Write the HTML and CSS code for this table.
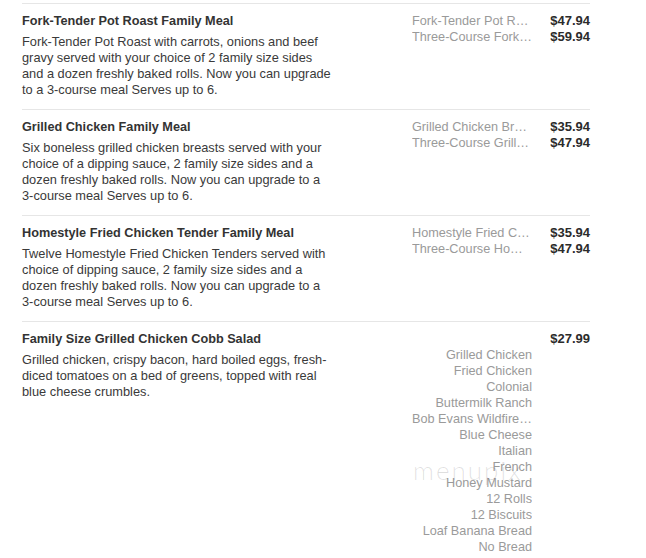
FILE: index.html
```html
<!DOCTYPE html>
<html>
<head>
<meta charset="utf-8">
<link rel="stylesheet" href="styles.css">
</head>
<body>
<div class="menu">
  <div class="item">
    <div class="info">
      <div class="title">Fork-Tender Pot Roast Family Meal</div>
      <div class="desc">Fork-Tender Pot Roast with carrots, onions and beef gravy served with your choice of 2 family size sides and a dozen freshly baked rolls. Now you can upgrade to a 3-course meal Serves up to 6.</div>
    </div>
    <div class="opts">
      <div class="opt">Fork-Tender Pot Roast Family Meal</div><div class="price">$47.94</div>
      <div class="opt">Three-Course Fork-Tender Pot Roast</div><div class="price">$59.94</div>
    </div>
  </div>
  <div class="item">
    <div class="info">
      <div class="title">Grilled Chicken Family Meal</div>
      <div class="desc">Six boneless grilled chicken breasts served with your choice of a dipping sauce, 2 family size sides and a dozen freshly baked rolls. Now you can upgrade to a 3-course meal Serves up to 6.</div>
    </div>
    <div class="opts">
      <div class="opt">Grilled Chicken Breast Family Meal</div><div class="price">$35.94</div>
      <div class="opt">Three-Course Grilled Chicken</div><div class="price">$47.94</div>
    </div>
  </div>
  <div class="item">
    <div class="info">
      <div class="title">Homestyle Fried Chicken Tender Family Meal</div>
      <div class="desc">Twelve Homestyle Fried Chicken Tenders served with choice of dipping sauce, 2 family size sides and a dozen freshly baked rolls. Now you can upgrade to a 3-course meal Serves up to 6.</div>
    </div>
    <div class="opts">
      <div class="opt">Homestyle Fried Chicken Tenders</div><div class="price">$35.94</div>
      <div class="opt">Three-Course Homestyle Fried</div><div class="price">$47.94</div>
    </div>
  </div>
  <div class="item last">
    <div class="info">
      <div class="title">Family Size Grilled Chicken Cobb Salad</div>
      <div class="desc">Grilled chicken, crispy bacon, hard boiled eggs, fresh-diced tomatoes on a bed of greens, topped with real blue cheese crumbles.</div>
    </div>
    <div class="opts">
      <div class="opt"></div><div class="price">$27.99</div>
      <div class="opt">Grilled Chicken</div><div class="price"></div>
      <div class="opt">Fried Chicken</div><div class="price"></div>
      <div class="opt">Colonial</div><div class="price"></div>
      <div class="opt">Buttermilk Ranch</div><div class="price"></div>
      <div class="opt">Bob Evans Wildfire BBQ Ranch</div><div class="price"></div>
      <div class="opt">Blue Cheese</div><div class="price"></div>
      <div class="opt">Italian</div><div class="price"></div>
      <div class="opt">French</div><div class="price"></div>
      <div class="opt">Honey Mustard</div><div class="price"></div>
      <div class="opt">12 Rolls</div><div class="price"></div>
      <div class="opt">12 Biscuits</div><div class="price"></div>
      <div class="opt">Loaf Banana Bread</div><div class="price"></div>
      <div class="opt">No Bread</div><div class="price"></div>
    </div>
    <div class="watermark">menupix</div>
  </div>
</div>
</body>
</html>
```
FILE: styles.css
```css
html, body {
  margin: 0;
  padding: 0;
  background: #fff;
}
body {
  font-family: "Liberation Sans", Arial, sans-serif;
  font-size: 13px;
  line-height: 16px;
  color: #333;
}
.menu {
  padding: 3px 0 0 22px;
  width: 568px;
}
.item {
  position: relative;
  display: flex;
  border-top: 1px solid #e6e6e6;
  padding: 9px 0 11px;
}
.info {
  width: 312px;
}
.title {
  font-weight: bold;
  font-size: 12.7px;
  color: #333;
}
.desc {
  margin-top: 5px;
  font-size: 12.8px;
  color: #3a3a3a;
}
.opts {
  margin-left: auto;
  display: grid;
  grid-template-columns: 120px 58px;
  grid-auto-rows: 16px;
  align-content: start;
}
.opt {
  font-size: 12.7px;
  color: #9a9a9a;
  text-align: right;
  white-space: nowrap;
  overflow: hidden;
  text-overflow: ellipsis;
}
.price {
  font-weight: bold;
  text-align: right;
  color: #2b2b2b;
}
.watermark {
  position: absolute;
  left: 391px;
  top: 135px;
  font-family: "Lato", sans-serif;
  font-weight: 300;
  font-size: 26px;
  line-height: 26px;
  letter-spacing: 2px;
  color: rgba(0, 0, 0, 0.12);
  pointer-events: none;
}
```
